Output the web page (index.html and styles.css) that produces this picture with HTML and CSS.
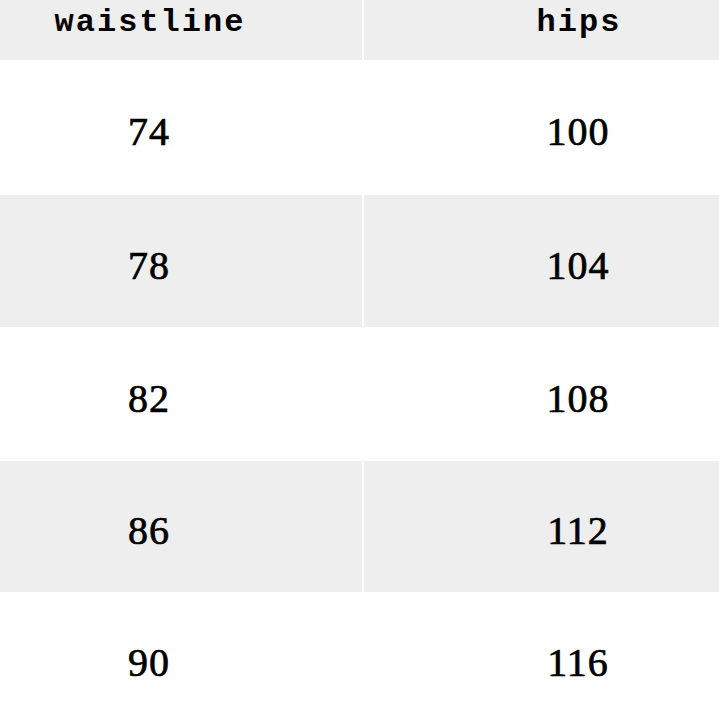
FILE: index.html
```html
<!DOCTYPE html>
<html lang="en">
<head>
<meta charset="utf-8">
<title>Size chart</title>
<link rel="stylesheet" href="styles.css">
</head>
<body>
<div class="viewport">
  <div class="table">
    <div class="cell head">waistline</div>
    <div class="cell head">hips</div>
    <div class="cell">74</div>
    <div class="cell">100</div>
    <div class="cell shade">78</div>
    <div class="cell shade">104</div>
    <div class="cell">82</div>
    <div class="cell">108</div>
    <div class="cell shade">86</div>
    <div class="cell shade">112</div>
    <div class="cell">90</div>
    <div class="cell">116</div>
  </div>
</div>
</body>
</html>
```

FILE: styles.css
```css
html, body {
  margin: 0;
  padding: 0;
  background: #ffffff;
}

.viewport {
  width: 719px;
  height: 719px;
  overflow: hidden;
}

.table {
  display: grid;
  grid-template-columns: 426px 428px;
  grid-template-rows: 60px 135px 132px 134px 131px 133px;
  column-gap: 2px;
  margin-left: -64px;
  background: #ffffff;
}

.cell {
  display: flex;
  align-items: center;
  justify-content: center;
  font-family: "Liberation Serif", "Times New Roman", serif;
  font-size: 40px;
  font-weight: normal;
  -webkit-text-stroke: 0.7px #000000;
  letter-spacing: 1px;
  color: #000000;
  padding-top: 8px;
  box-sizing: border-box;
}

.shade {
  background: #eeeeee;
}

.head {
  background: #eeeeee;
  align-items: flex-start;
  padding-top: 4px;
  font-family: "Liberation Mono", "Courier New", monospace;
  font-size: 32px;
  font-weight: bold;
  -webkit-text-stroke: 0;
  letter-spacing: 2px;
  text-indent: 2px;
}
```
